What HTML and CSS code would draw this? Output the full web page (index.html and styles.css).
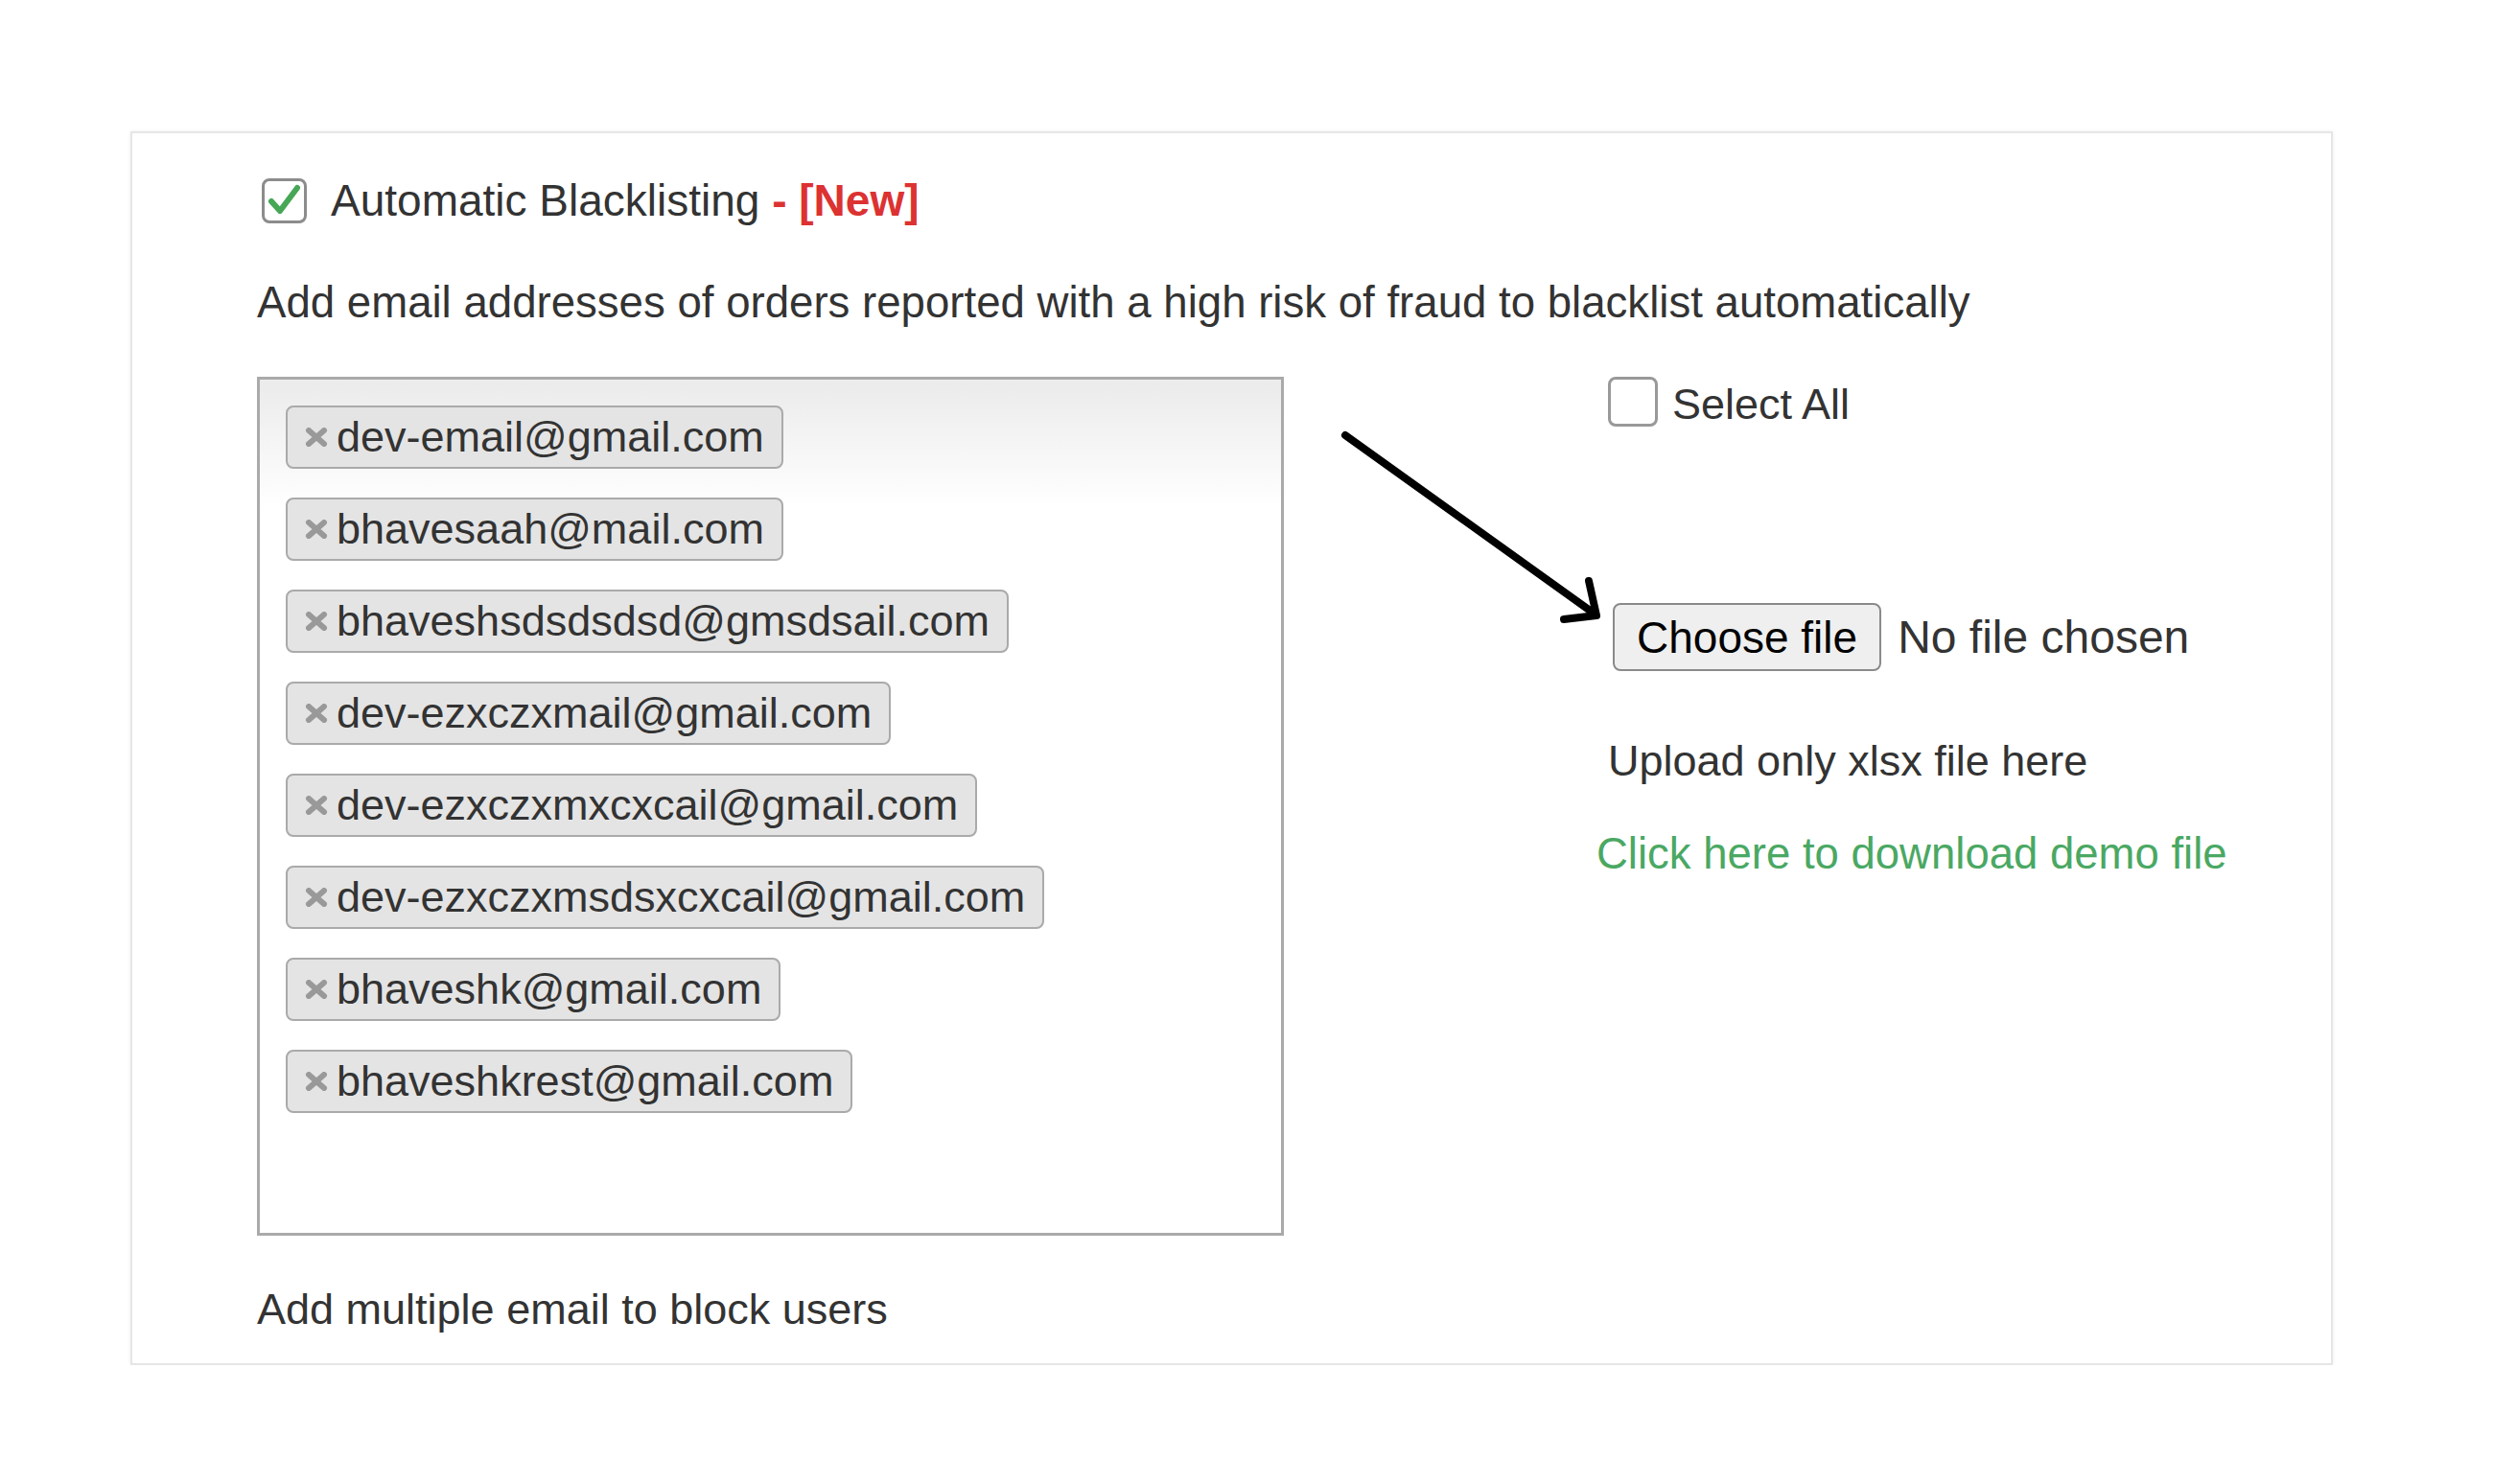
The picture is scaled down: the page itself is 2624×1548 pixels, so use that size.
FILE: index.html
```html
<!DOCTYPE html>
<html lang="en">
<head>
<meta charset="utf-8">
<title>Automatic Blacklisting</title>
<link rel="stylesheet" href="styles.css">
</head>
<body>
<div class="card">
  <div class="heading">
    <span class="cb cb-checked"><svg viewBox="0 0 41 41" width="41" height="41"><path d="M7 21 L16 31 L34 7" fill="none" stroke="#46a756" stroke-width="6" stroke-linecap="round" stroke-linejoin="round"/></svg></span>
    <span class="title">Automatic Blacklisting</span><span class="new">&nbsp;- [New]</span>
  </div>
  <p class="desc">Add email addresses of orders reported with a high risk of fraud to blacklist automatically</p>
  <div class="columns">
    <div class="emails">
      <span class="tag"><svg class="x" viewBox="0 0 24 20"><path d="M4 3 L20 17 M20 3 L4 17" stroke="#999" stroke-width="6" stroke-linecap="round"/></svg>dev-email@gmail.com</span>
      <span class="tag"><svg class="x" viewBox="0 0 24 20"><path d="M4 3 L20 17 M20 3 L4 17" stroke="#999" stroke-width="6" stroke-linecap="round"/></svg>bhavesaah@mail.com</span>
      <span class="tag"><svg class="x" viewBox="0 0 24 20"><path d="M4 3 L20 17 M20 3 L4 17" stroke="#999" stroke-width="6" stroke-linecap="round"/></svg>bhaveshsdsdsdsd@gmsdsail.com</span>
      <span class="tag"><svg class="x" viewBox="0 0 24 20"><path d="M4 3 L20 17 M20 3 L4 17" stroke="#999" stroke-width="6" stroke-linecap="round"/></svg>dev-ezxczxmail@gmail.com</span>
      <span class="tag"><svg class="x" viewBox="0 0 24 20"><path d="M4 3 L20 17 M20 3 L4 17" stroke="#999" stroke-width="6" stroke-linecap="round"/></svg>dev-ezxczxmxcxcail@gmail.com</span>
      <span class="tag"><svg class="x" viewBox="0 0 24 20"><path d="M4 3 L20 17 M20 3 L4 17" stroke="#999" stroke-width="6" stroke-linecap="round"/></svg>dev-ezxczxmsdsxcxcail@gmail.com</span>
      <span class="tag"><svg class="x" viewBox="0 0 24 20"><path d="M4 3 L20 17 M20 3 L4 17" stroke="#999" stroke-width="6" stroke-linecap="round"/></svg>bhaveshk@gmail.com</span>
      <span class="tag"><svg class="x" viewBox="0 0 24 20"><path d="M4 3 L20 17 M20 3 L4 17" stroke="#999" stroke-width="6" stroke-linecap="round"/></svg>bhaveshkrest@gmail.com</span>
    </div>
    <div class="upload">
      <div class="select"><span class="cb cb-empty"></span><span class="select-label">Select All</span></div>
      <div class="file"><span class="btn">Choose file</span><span class="nofile">No file chosen</span></div>
      <div class="note">Upload only xlsx file here</div>
      <a class="link" href="#">Click here to download demo file</a>
    </div>
    <svg class="arrow" viewBox="0 0 290 220" width="290" height="220">
      <path d="M13 14 L274 201" fill="none" stroke="#000" stroke-width="8" stroke-linecap="round"/>
      <path d="M267 166 L275 202 L241 206" fill="none" stroke="#000" stroke-width="8" stroke-linecap="round" stroke-linejoin="round"/>
    </svg>
  </div>
  <p class="help">Add multiple email to block users</p>
</div>
</body>
</html>
```
FILE: styles.css
```css
body {
  margin: 0;
  background: #ffffff;
  font-family: "Liberation Sans", Arial, Helvetica, sans-serif;
  font-size: 45px;
  line-height: 52px;
  color: #333333;
}

.card {
  margin: 137px 0 0 136px;
  width: 2297px;
  box-sizing: border-box;
  border: 2px solid #e6e6e6;
  box-shadow: 0 0 4px rgba(0, 0, 0, 0.07);
  padding: 44px 0 30px 130px;
  background: #fff;
}

.heading {
  display: flex;
  align-items: center;
  height: 52px;
  font-size: 46px;
}

.cb {
  box-sizing: border-box;
  border: 3px solid #8c8c8c;
  border-radius: 8px;
  background: #fff;
  display: flex;
  align-items: center;
  justify-content: center;
  flex: none;
}

.cb-checked {
  width: 47px;
  height: 47px;
  margin: 0 25px 0 5px;
}

.new {
  color: #dc3232;
  font-weight: bold;
}

.desc {
  margin: 55px 0 0;
  font-size: 45.6px;
}

.columns {
  position: relative;
  display: flex;
  margin-top: 51px;
}

.emails {
  width: 1071px;
  height: 896px;
  box-sizing: border-box;
  border: 3px solid #aaaaaa;
  padding: 27px;
  background: linear-gradient(#ececec 1%, #ffffff 15%);
  display: flex;
  flex-direction: column;
  align-items: flex-start;
  gap: 30px;
}

.tag {
  height: 66px;
  box-sizing: border-box;
  border: 2px solid #aaaaaa;
  border-radius: 8px;
  background: #e4e4e4;
  display: flex;
  align-items: center;
  padding: 0 18px;
  color: #333;
}

.tag .x {
  width: 24px;
  height: 20px;
  margin-right: 9px;
  flex: none;
}

.upload {
  margin-left: 338px;
  display: flex;
  flex-direction: column;
  align-items: flex-start;
}

.select {
  display: flex;
  align-items: center;
  height: 52px;
}

.select-label {
  padding-top: 5px;
}

.cb-empty {
  width: 52px;
  height: 52px;
  margin-right: 15px;
  border-color: #999;
}

.file {
  display: flex;
  align-items: center;
  margin: 184px 0 0 5px;
}

.btn {
  height: 71px;
  box-sizing: border-box;
  border: 2px solid #8a8a8a;
  border-radius: 8px;
  background: #efefef;
  padding: 0 23px;
  font-size: 46px;
  color: #000;
  display: flex;
  align-items: center;
}

.nofile {
  margin-left: 17px;
  font-size: 48px;
}

.note {
  margin-top: 68px;
}

.link {
  margin: 45px 0 0 -12px;
  color: #4aa863;
  font-size: 45.5px;
  text-decoration: none;
}

.arrow {
  position: absolute;
  left: 1122px;
  top: 47px;
}

.help {
  margin: 51px 0 0;
}
```
